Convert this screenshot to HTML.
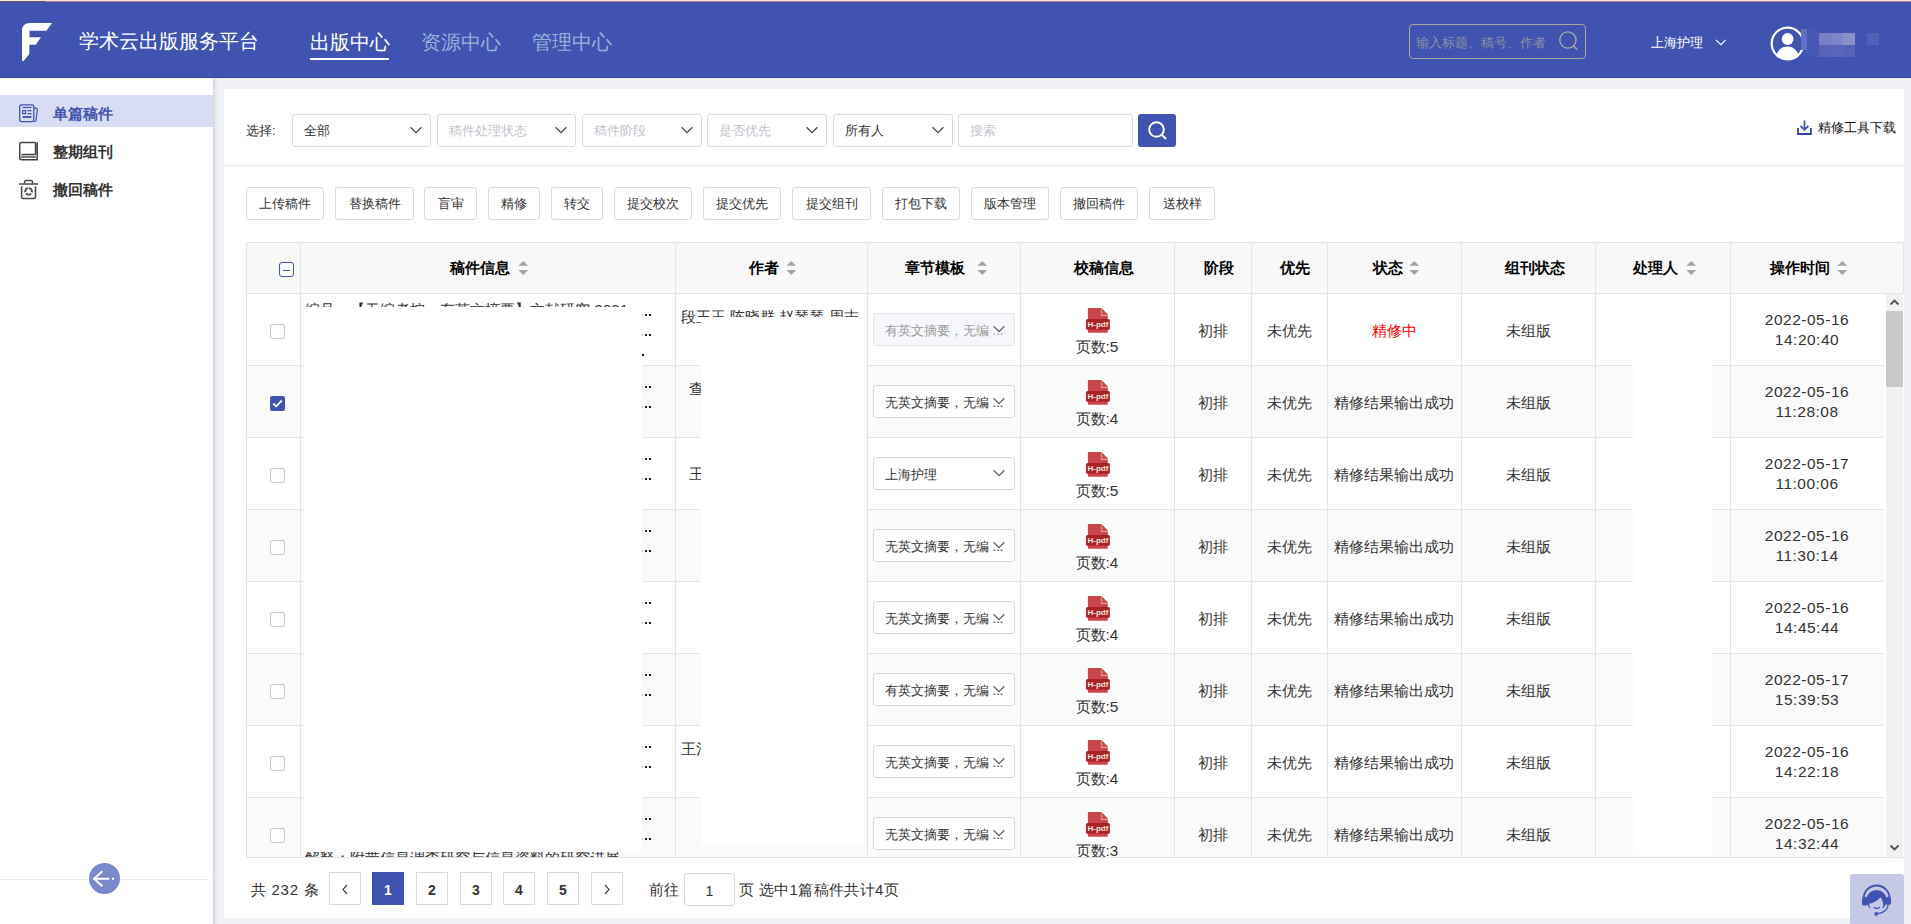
<!DOCTYPE html><html><head><meta charset="utf-8"><style>
*{box-sizing:border-box;margin:0;padding:0}
html,body{width:1911px;height:924px;overflow:hidden}
body{position:relative;background:#f0f1f5;font-family:"Liberation Sans",sans-serif;color:#333;}
.a{position:absolute}
.nw{white-space:nowrap}
#hdr{left:0;top:0;width:1911px;height:78px;background:#4153b1;}
.logo{left:22px;top:22px;width:32px;height:40px}
.ttl{left:79px;top:29px;font-size:20px;color:#fff;white-space:nowrap;line-height:24px}
.nav{top:30px;font-size:20px;line-height:24px;white-space:nowrap;color:#98b1d9}
.nav.on{color:#fff}
.hsearch{left:1409px;top:24px;width:177px;height:35px;border:1px solid #aaa69c;border-radius:4px}
.hsearch span{position:absolute;left:6px;top:10px;font-size:13px;line-height:16px;color:#8b8fa3;white-space:nowrap}
.org{left:1651px;top:35px;font-size:13px;line-height:16px;color:#fff;white-space:nowrap}
#side{left:0;top:78px;width:213px;height:846px;background:#fff}
#shadow{left:213px;top:78px;width:6px;height:846px;background:linear-gradient(to right,#d3d5d9,#e8eaee 45%,#f0f1f5)}
.sitem{left:0;width:213px;height:32px}
.sitem.on{background:#d8dcf5}
.sitem .tx{position:absolute;left:53px;top:11px;font-size:15px;line-height:16px;font-weight:bold;color:#333;white-space:nowrap}
.sitem.on .tx{color:#4153b1}
#card{left:224px;top:89px;width:1680px;height:829px;background:#fff}
.lbl{font-size:13px;line-height:16px;color:#333;white-space:nowrap}
.sel{height:33px;border:1px solid #dadada;border-radius:3px;background:#fff}
.sel span{position:absolute;left:11px;top:8px;font-size:13px;line-height:16px;white-space:nowrap;color:#333}
.sel span.ph{color:#c0c4cc}
.sel svg{position:absolute;right:8px;top:11px}
.btn{top:187px;height:33px;border:1px solid #dadada;border-radius:3px;background:#fff;font-size:13px;line-height:31px;text-align:center;color:#333;white-space:nowrap}
.hl{background:#e6e6e6}
.th{top:259px;font-size:15px;line-height:18px;font-weight:bold;color:#000;white-space:nowrap}
.td{font-size:15.3px;line-height:18px;color:#333;white-space:nowrap;text-align:center}
.rsel{left:873px;width:142px;height:33px;border:1px solid #d6d6d6;border-radius:3px;background:#fff}
.rsel.dis{background:#f5f7fa;border-color:#e4e7ed}
.rsel span{position:absolute;left:11px;top:9px;font-size:13px;line-height:16px;white-space:nowrap;color:#333}
.rsel.dis span{color:#999}
.rsel svg{position:absolute;left:119px;top:11px}
.cb{left:270px;width:15px;height:15px;border:1px solid #c9c9c9;border-radius:2px;background:#fff}
.red{background:#fff}
.pg{top:872px;width:32px;height:33px;border:1px solid #d9d9d9;background:#fff;font-size:14px;line-height:35px;text-align:center;font-weight:bold;color:#333}
</style></head><body>
<div id="hdr" class="a">
<div class="a" style="left:0;top:0;width:1911px;height:1px;background:#f3e9e6"></div>
<div class="a" style="left:0;top:1px;width:45px;height:1px;background:#6b5555"></div>
<div class="a" style="left:45px;top:1px;width:1866px;height:1px;background:#b27a86"></div>
<div class="a" style="left:0;top:77px;width:1911px;height:1px;background:#3343a5"></div>
<svg class="a" style="left:0;top:0" width="60" height="70" viewBox="0 0 60 70"><path d="M22 60 L22 31 Q22 23 30 23 L52 23 L46.4 30.7 L29.5 30.7 L29.5 37.2 L41 37.2 L35.8 44.8 L29.3 44.8 L29.3 54 L23.8 60.8 Q22 62 22 60 Z" fill="#fff"/></svg>
<div class="a ttl">学术云出版服务平台</div>
<div class="a nav on" style="left:310px">出版中心</div>
<div class="a nav" style="left:421px">资源中心</div>
<div class="a nav" style="left:532px">管理中心</div>
<div class="a" style="left:310px;top:58px;width:79px;height:2px;background:#fff"></div>
<div class="a hsearch"><span>输入标题、稿号、作者</span><svg class="a" style="left:148px;top:6px" width="22" height="22" viewBox="0 0 22 22"><circle cx="9.9" cy="9" r="8.1" fill="none" stroke="#aaa69c" stroke-width="1.4"/><path d="M15.6 15 L19.3 18.7" stroke="#aaa69c" stroke-width="1.4"/></svg></div>
<div class="a org">上海护理</div>
<svg class="a" style="left:1714px;top:38px" width="13" height="9" viewBox="0 0 13 9"><path d="M1.9 1.9 L6.9 6.7 L11.7 1.9" fill="none" stroke="#fff" stroke-width="1.1"/></svg>
<svg class="a" style="left:1769px;top:25px" width="37" height="37" viewBox="0 0 37 37"><circle cx="18.5" cy="18.5" r="15.8" fill="none" stroke="#fff" stroke-width="2.2"/><circle cx="18.6" cy="14" r="5.9" fill="#fff"/><path d="M7 31 Q10 21.5 18.6 21.5 Q27 21.5 30 31 Q25.5 35 18.5 35 Q11.5 35 7 31 Z" fill="#fff"/></svg>
<div class="a" style="left:1801px;top:29px;width:6px;height:21px;background:#6570c0"></div>
<div class="a" style="left:1807px;top:29px;width:12px;height:28px;background:#4758b4"></div>
<div class="a" style="left:1819px;top:33px;width:12px;height:12px;background:#7880c5"></div>
<div class="a" style="left:1831px;top:33px;width:12px;height:12px;background:#7a86c8"></div>
<div class="a" style="left:1843px;top:33px;width:12px;height:12px;background:#8a90c8"></div>
<div class="a" style="left:1819px;top:45px;width:12px;height:12px;background:#5863b8"></div>
<div class="a" style="left:1831px;top:45px;width:12px;height:12px;background:#5a66ba"></div>
<div class="a" style="left:1843px;top:45px;width:12px;height:12px;background:#5562b7"></div>
<div class="a" style="left:1867px;top:33px;width:12px;height:12px;background:#5260b8"></div>
</div>
<div id="side" class="a">
</div>
<div id="shadow" class="a"></div>
<div class="a sitem on" style="top:95px"><div class="tx">单篇稿件</div></div>
<div class="a sitem" style="top:133px"><div class="tx">整期组刊</div></div>
<div class="a sitem" style="top:171px"><div class="tx">撤回稿件</div></div>
<div id="card" class="a"></div>
<div class="a lbl" style="left:246px;top:123px">选择:</div>
<div class="a sel" style="left:292px;top:114px;width:139px"><span class="">全部</span><svg width="12" height="8" viewBox="0 0 12 8"><path d="M0.6 1.2 L6 6.6 L11.4 1.2" fill="none" stroke="#4a4a4a" stroke-width="1.3"/></svg></div>
<div class="a sel" style="left:437px;top:114px;width:139px"><span class="ph">稿件处理状态</span><svg width="12" height="8" viewBox="0 0 12 8"><path d="M0.6 1.2 L6 6.6 L11.4 1.2" fill="none" stroke="#4a4a4a" stroke-width="1.3"/></svg></div>
<div class="a sel" style="left:582px;top:114px;width:120px"><span class="ph">稿件阶段</span><svg width="12" height="8" viewBox="0 0 12 8"><path d="M0.6 1.2 L6 6.6 L11.4 1.2" fill="none" stroke="#4a4a4a" stroke-width="1.3"/></svg></div>
<div class="a sel" style="left:707px;top:114px;width:120px"><span class="ph">是否优先</span><svg width="12" height="8" viewBox="0 0 12 8"><path d="M0.6 1.2 L6 6.6 L11.4 1.2" fill="none" stroke="#4a4a4a" stroke-width="1.3"/></svg></div>
<div class="a sel" style="left:833px;top:114px;width:120px"><span class="">所有人</span><svg width="12" height="8" viewBox="0 0 12 8"><path d="M0.6 1.2 L6 6.6 L11.4 1.2" fill="none" stroke="#4a4a4a" stroke-width="1.3"/></svg></div>
<div class="a sel" style="left:958px;top:114px;width:175px"><span class="ph">搜索</span></div>
<div class="a" style="left:1138px;top:114px;width:38px;height:33px;background:#4153b1;border-radius:3px"><svg class="a" style="left:9px;top:6px" width="21" height="21" viewBox="0 0 21 21"><circle cx="9.5" cy="9.5" r="7.3" fill="none" stroke="#fff" stroke-width="2"/><path d="M14.8 14.8 L19 19" stroke="#fff" stroke-width="2"/></svg></div>
<svg class="a" style="left:1796px;top:120px" width="17" height="16" viewBox="0 0 17 16"><path d="M8.5 0.5 L8.5 9.5 M4.6 6 L8.5 9.8 L12.4 6" fill="none" stroke="#4153b1" stroke-width="1.8"/><path d="M2 8 L2 14 L14.9 14 L14.9 8" fill="none" stroke="#3444a8" stroke-width="1.8"/></svg>
<div class="a lbl" style="left:1818px;top:120px;color:#111">精修工具下载</div>
<div class="a hl" style="left:224px;top:165px;width:1680px;height:1px;background:#ebebeb"></div>
<div class="a btn" style="left:246px;width:78px">上传稿件</div>
<div class="a btn" style="left:335px;width:79px">替换稿件</div>
<div class="a btn" style="left:424px;width:53px">盲审</div>
<div class="a btn" style="left:488px;width:52px">精修</div>
<div class="a btn" style="left:551px;width:52px">转交</div>
<div class="a btn" style="left:614px;width:78px">提交校次</div>
<div class="a btn" style="left:703px;width:78px">提交优先</div>
<div class="a btn" style="left:792px;width:79px">提交组刊</div>
<div class="a btn" style="left:882px;width:78px">打包下载</div>
<div class="a btn" style="left:971px;width:78px">版本管理</div>
<div class="a btn" style="left:1060px;width:78px">撤回稿件</div>
<div class="a btn" style="left:1149px;width:66px">送校样</div>
<div class="a" style="left:246px;top:242px;width:1657px;height:51px;background:#f8f8f8"></div>
<div class="a" style="left:246px;top:293px;width:1638px;height:72px;background:#fff"></div>
<div class="a" style="left:246px;top:365px;width:1638px;height:72px;background:#fafafa"></div>
<div class="a" style="left:246px;top:437px;width:1638px;height:72px;background:#fff"></div>
<div class="a" style="left:246px;top:509px;width:1638px;height:72px;background:#fafafa"></div>
<div class="a" style="left:246px;top:581px;width:1638px;height:72px;background:#fff"></div>
<div class="a" style="left:246px;top:653px;width:1638px;height:72px;background:#fafafa"></div>
<div class="a" style="left:246px;top:725px;width:1638px;height:72px;background:#fff"></div>
<div class="a" style="left:246px;top:797px;width:1638px;height:60px;background:#fafafa"></div>
<div class="a" style="left:246px;top:242px;width:1658px;height:1px;background:#e4e4e4"></div>
<div class="a" style="left:246px;top:293px;width:1658px;height:1px;background:#e4e4e4"></div>
<div class="a" style="left:246px;top:365px;width:1638px;height:1px;background:#e4e4e4"></div>
<div class="a" style="left:246px;top:437px;width:1638px;height:1px;background:#e4e4e4"></div>
<div class="a" style="left:246px;top:509px;width:1638px;height:1px;background:#e4e4e4"></div>
<div class="a" style="left:246px;top:581px;width:1638px;height:1px;background:#e4e4e4"></div>
<div class="a" style="left:246px;top:653px;width:1638px;height:1px;background:#e4e4e4"></div>
<div class="a" style="left:246px;top:725px;width:1638px;height:1px;background:#e4e4e4"></div>
<div class="a" style="left:246px;top:797px;width:1638px;height:1px;background:#e4e4e4"></div>
<div class="a" style="left:246px;top:857px;width:1658px;height:1px;background:#e4e4e4"></div>
<div class="a" style="left:246px;top:242px;width:1px;height:615px;background:#e4e4e4"></div>
<div class="a" style="left:300px;top:242px;width:1px;height:615px;background:#e4e4e4"></div>
<div class="a" style="left:675px;top:242px;width:1px;height:615px;background:#e4e4e4"></div>
<div class="a" style="left:867px;top:242px;width:1px;height:615px;background:#e4e4e4"></div>
<div class="a" style="left:1020px;top:242px;width:1px;height:615px;background:#e4e4e4"></div>
<div class="a" style="left:1174px;top:242px;width:1px;height:615px;background:#e4e4e4"></div>
<div class="a" style="left:1251px;top:242px;width:1px;height:615px;background:#e4e4e4"></div>
<div class="a" style="left:1327px;top:242px;width:1px;height:615px;background:#e4e4e4"></div>
<div class="a" style="left:1461px;top:242px;width:1px;height:615px;background:#e4e4e4"></div>
<div class="a" style="left:1595px;top:242px;width:1px;height:615px;background:#e4e4e4"></div>
<div class="a" style="left:1730px;top:242px;width:1px;height:615px;background:#e4e4e4"></div>
<div class="a" style="left:1903px;top:242px;width:1px;height:51px;background:#e4e4e4"></div>
<div class="a" style="left:1886px;top:294px;width:17px;height:563px;background:#f1f1f1"></div>
<div class="a" style="left:1886px;top:311px;width:17px;height:76px;background:#c9c9c9"></div>
<svg class="a" style="left:1889px;top:298px" width="11" height="8" viewBox="0 0 11 8"><path d="M1.5 6.5 L5.5 2.5 L9.5 6.5" fill="none" stroke="#505050" stroke-width="1.8"/></svg>
<svg class="a" style="left:1889px;top:844px" width="11" height="8" viewBox="0 0 11 8"><path d="M1.5 1.5 L5.5 5.5 L9.5 1.5" fill="none" stroke="#505050" stroke-width="1.8"/></svg>
<div class="a" style="left:279px;top:262px;width:15px;height:15px;border:1px solid #4153b1;border-radius:3px;background:#fff"><div class="a" style="left:3px;top:7px;width:7px;height:1px;background:#4153b1"></div></div>
<div class="a th" style="left:450px">稿件信息</div>
<svg class="a" style="left:518px;top:261px" width="11" height="15" viewBox="0 0 11 15"><path d="M5.3 0 L10.2 4.8 L0.4 4.8 Z" fill="#a3a3a3"/><path d="M5.3 13.9 L10.2 9.1 L0.4 9.1 Z" fill="#a3a3a3"/></svg>
<div class="a th" style="left:749px">作者</div>
<svg class="a" style="left:786px;top:261px" width="11" height="15" viewBox="0 0 11 15"><path d="M5.3 0 L10.2 4.8 L0.4 4.8 Z" fill="#a3a3a3"/><path d="M5.3 13.9 L10.2 9.1 L0.4 9.1 Z" fill="#a3a3a3"/></svg>
<div class="a th" style="left:905px">章节模板</div>
<svg class="a" style="left:977px;top:261px" width="11" height="15" viewBox="0 0 11 15"><path d="M5.3 0 L10.2 4.8 L0.4 4.8 Z" fill="#a3a3a3"/><path d="M5.3 13.9 L10.2 9.1 L0.4 9.1 Z" fill="#a3a3a3"/></svg>
<div class="a th" style="left:1074px">校稿信息</div>
<div class="a th" style="left:1204px">阶段</div>
<div class="a th" style="left:1280px">优先</div>
<div class="a th" style="left:1373px">状态</div>
<svg class="a" style="left:1409px;top:261px" width="11" height="15" viewBox="0 0 11 15"><path d="M5.3 0 L10.2 4.8 L0.4 4.8 Z" fill="#a3a3a3"/><path d="M5.3 13.9 L10.2 9.1 L0.4 9.1 Z" fill="#a3a3a3"/></svg>
<div class="a th" style="left:1505px">组刊状态</div>
<div class="a th" style="left:1633px">处理人</div>
<svg class="a" style="left:1686px;top:261px" width="11" height="15" viewBox="0 0 11 15"><path d="M5.3 0 L10.2 4.8 L0.4 4.8 Z" fill="#a3a3a3"/><path d="M5.3 13.9 L10.2 9.1 L0.4 9.1 Z" fill="#a3a3a3"/></svg>
<div class="a th" style="left:1770px">操作时间</div>
<svg class="a" style="left:1837px;top:261px" width="11" height="15" viewBox="0 0 11 15"><path d="M5.3 0 L10.2 4.8 L0.4 4.8 Z" fill="#a3a3a3"/><path d="M5.3 13.9 L10.2 9.1 L0.4 9.1 Z" fill="#a3a3a3"/></svg>
<div class="a" style="left:246px;top:294px;width:1638px;height:563px;overflow:hidden">
<div class="a cb" style="left:24px;top:30px"></div>
<div class="a rsel dis" style="left:627px;top:19px"><span>有英文摘要，无编 ...</span><svg width="12" height="8" viewBox="0 0 12 8"><path d="M0.6 1.2 L6 6.6 L11.4 1.2" fill="none" stroke="#606266" stroke-width="1.3"/></svg></div>
<svg class="a" style="left:839px;top:13px" width="26" height="27" viewBox="0 0 26 27"><path d="M2.9 2 Q2.9 1 3.9 1 L16.4 1 L22.8 7.4 L22.8 24.7 Q22.8 25.7 21.8 25.7 L3.9 25.7 Q2.9 25.7 2.9 24.7 Z" fill="#c9464a"/><path d="M16.4 1.2 L16.4 8.4 L22.7 8.4" fill="none" stroke="#eab4b4" stroke-width="0.9"/><path d="M16.9 1.8 L22.2 7.4 L16.9 7.4 Z" fill="#cf5055"/><rect x="1" y="12" width="23.9" height="10.8" rx="1.5" fill="#a92228"/><text x="12.9" y="20.3" font-family="Liberation Sans" font-size="8" font-weight="bold" fill="#f2e2e2" text-anchor="middle">H-pdf</text></svg>
<div class="a td" style="left:774px;top:44px;width:154px">页数:5</div>
<div class="a td" style="left:928px;top:28px;width:77px">初排</div>
<div class="a td" style="left:1005px;top:28px;width:76px">未优先</div>
<div class="a td" style="left:1081px;top:28px;width:134px;color:#f00">精修中</div>
<div class="a td" style="left:1215px;top:28px;width:134px">未组版</div>
<div class="a td" style="left:1484px;top:16px;width:154px;line-height:20px;font-size:15.5px;letter-spacing:0.5px">2022-05-16<br>14:20:40</div>
<div class="a" style="left:395px;top:20px;width:2px;height:2px;background:#bbb"></div>
<div class="a" style="left:399px;top:20px;width:2px;height:2px;background:#222"></div>
<div class="a" style="left:403px;top:20px;width:2px;height:2px;background:#222"></div>
<div class="a" style="left:395px;top:40px;width:2px;height:2px;background:#bbb"></div>
<div class="a" style="left:399px;top:40px;width:2px;height:2px;background:#222"></div>
<div class="a" style="left:403px;top:40px;width:2px;height:2px;background:#222"></div>
<div class="a" style="left:24px;top:102px;width:15px;height:15px;background:#4153b1;border-radius:2px"><svg class="a" style="left:2px;top:3px" width="11" height="9" viewBox="0 0 11 9"><path d="M1.2 4.5 L4.2 7.3 L9.8 1.5" fill="none" stroke="#fff" stroke-width="1.8"/></svg></div>
<div class="a rsel" style="left:627px;top:91px"><span>无英文摘要，无编 ...</span><svg width="12" height="8" viewBox="0 0 12 8"><path d="M0.6 1.2 L6 6.6 L11.4 1.2" fill="none" stroke="#606266" stroke-width="1.3"/></svg></div>
<svg class="a" style="left:839px;top:85px" width="26" height="27" viewBox="0 0 26 27"><path d="M2.9 2 Q2.9 1 3.9 1 L16.4 1 L22.8 7.4 L22.8 24.7 Q22.8 25.7 21.8 25.7 L3.9 25.7 Q2.9 25.7 2.9 24.7 Z" fill="#c9464a"/><path d="M16.4 1.2 L16.4 8.4 L22.7 8.4" fill="none" stroke="#eab4b4" stroke-width="0.9"/><path d="M16.9 1.8 L22.2 7.4 L16.9 7.4 Z" fill="#cf5055"/><rect x="1" y="12" width="23.9" height="10.8" rx="1.5" fill="#a92228"/><text x="12.9" y="20.3" font-family="Liberation Sans" font-size="8" font-weight="bold" fill="#f2e2e2" text-anchor="middle">H-pdf</text></svg>
<div class="a td" style="left:774px;top:116px;width:154px">页数:4</div>
<div class="a td" style="left:928px;top:100px;width:77px">初排</div>
<div class="a td" style="left:1005px;top:100px;width:76px">未优先</div>
<div class="a td" style="left:1081px;top:100px;width:134px;color:#333">精修结果输出成功</div>
<div class="a td" style="left:1215px;top:100px;width:134px">未组版</div>
<div class="a td" style="left:1484px;top:88px;width:154px;line-height:20px;font-size:15.5px;letter-spacing:0.5px">2022-05-16<br>11:28:08</div>
<div class="a" style="left:395px;top:92px;width:2px;height:2px;background:#bbb"></div>
<div class="a" style="left:399px;top:92px;width:2px;height:2px;background:#222"></div>
<div class="a" style="left:403px;top:92px;width:2px;height:2px;background:#222"></div>
<div class="a" style="left:395px;top:112px;width:2px;height:2px;background:#bbb"></div>
<div class="a" style="left:399px;top:112px;width:2px;height:2px;background:#222"></div>
<div class="a" style="left:403px;top:112px;width:2px;height:2px;background:#222"></div>
<div class="a cb" style="left:24px;top:174px"></div>
<div class="a rsel" style="left:627px;top:163px"><span>上海护理</span><svg width="12" height="8" viewBox="0 0 12 8"><path d="M0.6 1.2 L6 6.6 L11.4 1.2" fill="none" stroke="#606266" stroke-width="1.3"/></svg></div>
<svg class="a" style="left:839px;top:157px" width="26" height="27" viewBox="0 0 26 27"><path d="M2.9 2 Q2.9 1 3.9 1 L16.4 1 L22.8 7.4 L22.8 24.7 Q22.8 25.7 21.8 25.7 L3.9 25.7 Q2.9 25.7 2.9 24.7 Z" fill="#c9464a"/><path d="M16.4 1.2 L16.4 8.4 L22.7 8.4" fill="none" stroke="#eab4b4" stroke-width="0.9"/><path d="M16.9 1.8 L22.2 7.4 L16.9 7.4 Z" fill="#cf5055"/><rect x="1" y="12" width="23.9" height="10.8" rx="1.5" fill="#a92228"/><text x="12.9" y="20.3" font-family="Liberation Sans" font-size="8" font-weight="bold" fill="#f2e2e2" text-anchor="middle">H-pdf</text></svg>
<div class="a td" style="left:774px;top:188px;width:154px">页数:5</div>
<div class="a td" style="left:928px;top:172px;width:77px">初排</div>
<div class="a td" style="left:1005px;top:172px;width:76px">未优先</div>
<div class="a td" style="left:1081px;top:172px;width:134px;color:#333">精修结果输出成功</div>
<div class="a td" style="left:1215px;top:172px;width:134px">未组版</div>
<div class="a td" style="left:1484px;top:160px;width:154px;line-height:20px;font-size:15.5px;letter-spacing:0.5px">2022-05-17<br>11:00:06</div>
<div class="a" style="left:395px;top:164px;width:2px;height:2px;background:#bbb"></div>
<div class="a" style="left:399px;top:164px;width:2px;height:2px;background:#222"></div>
<div class="a" style="left:403px;top:164px;width:2px;height:2px;background:#222"></div>
<div class="a" style="left:395px;top:184px;width:2px;height:2px;background:#bbb"></div>
<div class="a" style="left:399px;top:184px;width:2px;height:2px;background:#222"></div>
<div class="a" style="left:403px;top:184px;width:2px;height:2px;background:#222"></div>
<div class="a cb" style="left:24px;top:246px"></div>
<div class="a rsel" style="left:627px;top:235px"><span>无英文摘要，无编 ...</span><svg width="12" height="8" viewBox="0 0 12 8"><path d="M0.6 1.2 L6 6.6 L11.4 1.2" fill="none" stroke="#606266" stroke-width="1.3"/></svg></div>
<svg class="a" style="left:839px;top:229px" width="26" height="27" viewBox="0 0 26 27"><path d="M2.9 2 Q2.9 1 3.9 1 L16.4 1 L22.8 7.4 L22.8 24.7 Q22.8 25.7 21.8 25.7 L3.9 25.7 Q2.9 25.7 2.9 24.7 Z" fill="#c9464a"/><path d="M16.4 1.2 L16.4 8.4 L22.7 8.4" fill="none" stroke="#eab4b4" stroke-width="0.9"/><path d="M16.9 1.8 L22.2 7.4 L16.9 7.4 Z" fill="#cf5055"/><rect x="1" y="12" width="23.9" height="10.8" rx="1.5" fill="#a92228"/><text x="12.9" y="20.3" font-family="Liberation Sans" font-size="8" font-weight="bold" fill="#f2e2e2" text-anchor="middle">H-pdf</text></svg>
<div class="a td" style="left:774px;top:260px;width:154px">页数:4</div>
<div class="a td" style="left:928px;top:244px;width:77px">初排</div>
<div class="a td" style="left:1005px;top:244px;width:76px">未优先</div>
<div class="a td" style="left:1081px;top:244px;width:134px;color:#333">精修结果输出成功</div>
<div class="a td" style="left:1215px;top:244px;width:134px">未组版</div>
<div class="a td" style="left:1484px;top:232px;width:154px;line-height:20px;font-size:15.5px;letter-spacing:0.5px">2022-05-16<br>11:30:14</div>
<div class="a" style="left:395px;top:236px;width:2px;height:2px;background:#bbb"></div>
<div class="a" style="left:399px;top:236px;width:2px;height:2px;background:#222"></div>
<div class="a" style="left:403px;top:236px;width:2px;height:2px;background:#222"></div>
<div class="a" style="left:395px;top:256px;width:2px;height:2px;background:#bbb"></div>
<div class="a" style="left:399px;top:256px;width:2px;height:2px;background:#222"></div>
<div class="a" style="left:403px;top:256px;width:2px;height:2px;background:#222"></div>
<div class="a cb" style="left:24px;top:318px"></div>
<div class="a rsel" style="left:627px;top:307px"><span>无英文摘要，无编 ...</span><svg width="12" height="8" viewBox="0 0 12 8"><path d="M0.6 1.2 L6 6.6 L11.4 1.2" fill="none" stroke="#606266" stroke-width="1.3"/></svg></div>
<svg class="a" style="left:839px;top:301px" width="26" height="27" viewBox="0 0 26 27"><path d="M2.9 2 Q2.9 1 3.9 1 L16.4 1 L22.8 7.4 L22.8 24.7 Q22.8 25.7 21.8 25.7 L3.9 25.7 Q2.9 25.7 2.9 24.7 Z" fill="#c9464a"/><path d="M16.4 1.2 L16.4 8.4 L22.7 8.4" fill="none" stroke="#eab4b4" stroke-width="0.9"/><path d="M16.9 1.8 L22.2 7.4 L16.9 7.4 Z" fill="#cf5055"/><rect x="1" y="12" width="23.9" height="10.8" rx="1.5" fill="#a92228"/><text x="12.9" y="20.3" font-family="Liberation Sans" font-size="8" font-weight="bold" fill="#f2e2e2" text-anchor="middle">H-pdf</text></svg>
<div class="a td" style="left:774px;top:332px;width:154px">页数:4</div>
<div class="a td" style="left:928px;top:316px;width:77px">初排</div>
<div class="a td" style="left:1005px;top:316px;width:76px">未优先</div>
<div class="a td" style="left:1081px;top:316px;width:134px;color:#333">精修结果输出成功</div>
<div class="a td" style="left:1215px;top:316px;width:134px">未组版</div>
<div class="a td" style="left:1484px;top:304px;width:154px;line-height:20px;font-size:15.5px;letter-spacing:0.5px">2022-05-16<br>14:45:44</div>
<div class="a" style="left:395px;top:308px;width:2px;height:2px;background:#bbb"></div>
<div class="a" style="left:399px;top:308px;width:2px;height:2px;background:#222"></div>
<div class="a" style="left:403px;top:308px;width:2px;height:2px;background:#222"></div>
<div class="a" style="left:395px;top:328px;width:2px;height:2px;background:#bbb"></div>
<div class="a" style="left:399px;top:328px;width:2px;height:2px;background:#222"></div>
<div class="a" style="left:403px;top:328px;width:2px;height:2px;background:#222"></div>
<div class="a cb" style="left:24px;top:390px"></div>
<div class="a rsel" style="left:627px;top:379px"><span>有英文摘要，无编 ...</span><svg width="12" height="8" viewBox="0 0 12 8"><path d="M0.6 1.2 L6 6.6 L11.4 1.2" fill="none" stroke="#606266" stroke-width="1.3"/></svg></div>
<svg class="a" style="left:839px;top:373px" width="26" height="27" viewBox="0 0 26 27"><path d="M2.9 2 Q2.9 1 3.9 1 L16.4 1 L22.8 7.4 L22.8 24.7 Q22.8 25.7 21.8 25.7 L3.9 25.7 Q2.9 25.7 2.9 24.7 Z" fill="#c9464a"/><path d="M16.4 1.2 L16.4 8.4 L22.7 8.4" fill="none" stroke="#eab4b4" stroke-width="0.9"/><path d="M16.9 1.8 L22.2 7.4 L16.9 7.4 Z" fill="#cf5055"/><rect x="1" y="12" width="23.9" height="10.8" rx="1.5" fill="#a92228"/><text x="12.9" y="20.3" font-family="Liberation Sans" font-size="8" font-weight="bold" fill="#f2e2e2" text-anchor="middle">H-pdf</text></svg>
<div class="a td" style="left:774px;top:404px;width:154px">页数:5</div>
<div class="a td" style="left:928px;top:388px;width:77px">初排</div>
<div class="a td" style="left:1005px;top:388px;width:76px">未优先</div>
<div class="a td" style="left:1081px;top:388px;width:134px;color:#333">精修结果输出成功</div>
<div class="a td" style="left:1215px;top:388px;width:134px">未组版</div>
<div class="a td" style="left:1484px;top:376px;width:154px;line-height:20px;font-size:15.5px;letter-spacing:0.5px">2022-05-17<br>15:39:53</div>
<div class="a" style="left:395px;top:380px;width:2px;height:2px;background:#bbb"></div>
<div class="a" style="left:399px;top:380px;width:2px;height:2px;background:#222"></div>
<div class="a" style="left:403px;top:380px;width:2px;height:2px;background:#222"></div>
<div class="a" style="left:395px;top:400px;width:2px;height:2px;background:#bbb"></div>
<div class="a" style="left:399px;top:400px;width:2px;height:2px;background:#222"></div>
<div class="a" style="left:403px;top:400px;width:2px;height:2px;background:#222"></div>
<div class="a cb" style="left:24px;top:462px"></div>
<div class="a rsel" style="left:627px;top:451px"><span>无英文摘要，无编 ...</span><svg width="12" height="8" viewBox="0 0 12 8"><path d="M0.6 1.2 L6 6.6 L11.4 1.2" fill="none" stroke="#606266" stroke-width="1.3"/></svg></div>
<svg class="a" style="left:839px;top:445px" width="26" height="27" viewBox="0 0 26 27"><path d="M2.9 2 Q2.9 1 3.9 1 L16.4 1 L22.8 7.4 L22.8 24.7 Q22.8 25.7 21.8 25.7 L3.9 25.7 Q2.9 25.7 2.9 24.7 Z" fill="#c9464a"/><path d="M16.4 1.2 L16.4 8.4 L22.7 8.4" fill="none" stroke="#eab4b4" stroke-width="0.9"/><path d="M16.9 1.8 L22.2 7.4 L16.9 7.4 Z" fill="#cf5055"/><rect x="1" y="12" width="23.9" height="10.8" rx="1.5" fill="#a92228"/><text x="12.9" y="20.3" font-family="Liberation Sans" font-size="8" font-weight="bold" fill="#f2e2e2" text-anchor="middle">H-pdf</text></svg>
<div class="a td" style="left:774px;top:476px;width:154px">页数:4</div>
<div class="a td" style="left:928px;top:460px;width:77px">初排</div>
<div class="a td" style="left:1005px;top:460px;width:76px">未优先</div>
<div class="a td" style="left:1081px;top:460px;width:134px;color:#333">精修结果输出成功</div>
<div class="a td" style="left:1215px;top:460px;width:134px">未组版</div>
<div class="a td" style="left:1484px;top:448px;width:154px;line-height:20px;font-size:15.5px;letter-spacing:0.5px">2022-05-16<br>14:22:18</div>
<div class="a" style="left:395px;top:452px;width:2px;height:2px;background:#bbb"></div>
<div class="a" style="left:399px;top:452px;width:2px;height:2px;background:#222"></div>
<div class="a" style="left:403px;top:452px;width:2px;height:2px;background:#222"></div>
<div class="a" style="left:395px;top:472px;width:2px;height:2px;background:#bbb"></div>
<div class="a" style="left:399px;top:472px;width:2px;height:2px;background:#222"></div>
<div class="a" style="left:403px;top:472px;width:2px;height:2px;background:#222"></div>
<div class="a cb" style="left:24px;top:534px"></div>
<div class="a rsel" style="left:627px;top:523px"><span>无英文摘要，无编 ...</span><svg width="12" height="8" viewBox="0 0 12 8"><path d="M0.6 1.2 L6 6.6 L11.4 1.2" fill="none" stroke="#606266" stroke-width="1.3"/></svg></div>
<svg class="a" style="left:839px;top:517px" width="26" height="27" viewBox="0 0 26 27"><path d="M2.9 2 Q2.9 1 3.9 1 L16.4 1 L22.8 7.4 L22.8 24.7 Q22.8 25.7 21.8 25.7 L3.9 25.7 Q2.9 25.7 2.9 24.7 Z" fill="#c9464a"/><path d="M16.4 1.2 L16.4 8.4 L22.7 8.4" fill="none" stroke="#eab4b4" stroke-width="0.9"/><path d="M16.9 1.8 L22.2 7.4 L16.9 7.4 Z" fill="#cf5055"/><rect x="1" y="12" width="23.9" height="10.8" rx="1.5" fill="#a92228"/><text x="12.9" y="20.3" font-family="Liberation Sans" font-size="8" font-weight="bold" fill="#f2e2e2" text-anchor="middle">H-pdf</text></svg>
<div class="a td" style="left:774px;top:548px;width:154px">页数:3</div>
<div class="a td" style="left:928px;top:532px;width:77px">初排</div>
<div class="a td" style="left:1005px;top:532px;width:76px">未优先</div>
<div class="a td" style="left:1081px;top:532px;width:134px;color:#333">精修结果输出成功</div>
<div class="a td" style="left:1215px;top:532px;width:134px">未组版</div>
<div class="a td" style="left:1484px;top:520px;width:154px;line-height:20px;font-size:15.5px;letter-spacing:0.5px">2022-05-16<br>14:32:44</div>
<div class="a" style="left:395px;top:524px;width:2px;height:2px;background:#bbb"></div>
<div class="a" style="left:399px;top:524px;width:2px;height:2px;background:#222"></div>
<div class="a" style="left:403px;top:524px;width:2px;height:2px;background:#222"></div>
<div class="a" style="left:395px;top:544px;width:2px;height:2px;background:#bbb"></div>
<div class="a" style="left:399px;top:544px;width:2px;height:2px;background:#222"></div>
<div class="a" style="left:403px;top:544px;width:2px;height:2px;background:#222"></div>
</div>
<div class="a" style="left:246px;top:294px;width:1638px;height:563px;overflow:hidden">
<div class="a td" style="left:59px;top:7px;text-align:left">编号：【无编者按，有英文摘要】文献研究 2021</div>
<div class="a td" style="left:59px;top:555px;text-align:left">解释；附带信息调查研究与信息资料的研究进展</div>
<div class="a" style="left:396px;top:60px;width:2px;height:2px;background:#222"></div>
<div class="a td" style="left:435px;top:14px;text-align:left">段王玉 陈晓群 赵琴琴 周志</div>
<div class="a td" style="left:443px;top:86px;text-align:left">查</div>
<div class="a td" style="left:443px;top:171px;text-align:left">王</div>
<div class="a td" style="left:435px;top:446px;text-align:left">王治</div>
</div>
<div class="a red" style="left:304px;top:307px;width:338px;height:545px"></div>
<div class="a red" style="left:701px;top:317px;width:165px;height:528px"></div>
<div class="a red" style="left:1633px;top:330px;width:79px;height:525px"></div>
<div class="a lbl" style="left:251px;top:881px;font-size:15px;line-height:18px;letter-spacing:0.7px">共 232 条</div>
<div class="a pg" style="left:329px"><svg class="a" style="left:10px;top:11px" width="10" height="11" viewBox="0 0 10 11"><path d="M7 1 L3 5.5 L7 10" fill="none" stroke="#444" stroke-width="1.2"/></svg></div>
<div class="a pg" style="left:372px;background:#4153b1;border-color:#4153b1;color:#fff">1</div>
<div class="a pg" style="left:416px">2</div>
<div class="a pg" style="left:460px">3</div>
<div class="a pg" style="left:503px">4</div>
<div class="a pg" style="left:547px">5</div>
<div class="a pg" style="left:591px"><svg class="a" style="left:10px;top:11px" width="10" height="11" viewBox="0 0 10 11"><path d="M3 1 L7 5.5 L3 10" fill="none" stroke="#444" stroke-width="1.2"/></svg></div>
<div class="a lbl" style="left:649px;top:881px;font-size:15px;line-height:18px">前往</div>
<div class="a" style="left:684px;top:873px;width:51px;height:33px;border:1px solid #d9d9d9;border-radius:3px;background:#fff;font-size:14px;line-height:35px;text-align:center;color:#333">1</div>
<div class="a lbl" style="left:739px;top:881px;font-size:15px;line-height:18px;letter-spacing:0.35px">页 选中1篇稿件共计4页</div>
<div class="a" style="left:0;top:879px;width:209px;height:1px;background:#e9eaef"></div>
<div class="a" style="left:89px;top:863px;width:31px;height:31px;border-radius:50%;background:#7a88cc"><svg class="a" style="left:0;top:0" width="31" height="31" viewBox="0 0 31 31"><path d="M13.4 8.2 L5 15.7 L13.4 23.3 M5.2 15.7 L20.3 15.7" fill="none" stroke="#fff" stroke-width="1.9"/><rect x="23" y="14.7" width="2" height="2" fill="#fff"/></svg></div>
<div class="a" style="left:1850px;top:874px;width:54px;height:50px;background:#c5c9e6;border-radius:3px 3px 0 0"></div>
<svg class="a" style="left:1850px;top:874px" width="54" height="50" viewBox="0 0 54 50"><path d="M13.6 24.5 A13 13 0 0 1 39.6 24.5" fill="none" stroke="#4153b1" stroke-width="1.9"/><rect x="12" y="22.8" width="5.6" height="8.8" rx="2.6" fill="#4153b1"/><rect x="35.6" y="22.8" width="5.5" height="8" rx="2.6" fill="#4153b1"/><circle cx="26.5" cy="26.3" r="10.3" fill="#4153b1"/><path d="M19 29.8 Q25.5 28.6 30.6 23.2 Q33.2 26.8 33.3 31.5 Q32.5 35 30.5 37.5 L22.5 38 Q19.6 34 19 29.8 Z" fill="#c5c9e6"/><path d="M23.8 33.3 Q26.8 35.6 29.8 33.3" fill="none" stroke="#4153b1" stroke-width="1.3"/><path d="M38.2 30.5 Q37.5 38.5 27.5 39.6" fill="none" stroke="#4153b1" stroke-width="1.3"/><circle cx="26.2" cy="39.9" r="1.9" fill="#4153b1"/></svg>
<svg class="a" style="left:18px;top:103px" width="22" height="21" viewBox="0 0 22 21"><rect x="1.7" y="1.8" width="14.1" height="16.8" rx="1.8" fill="none" stroke="#4153b1" stroke-width="1.3"/><path d="M16 4.8 L18.6 5.3 Q19.4 5.8 19.3 6.8 L18 17.6 Q17.6 18.8 16 18.6" fill="none" stroke="#4153b1" stroke-width="1.2"/><path d="M4.5 4.5 L13.5 4.5" stroke="#4153b1" stroke-width="1.2"/><rect x="4.6" y="7.6" width="3" height="3" fill="none" stroke="#4153b1" stroke-width="1.2"/><path d="M9.5 7.6 L13.5 7.6 M9.5 10.6 L13.5 10.6" stroke="#4153b1" stroke-width="1.2"/><path d="M4.5 14 L13.5 14" stroke="#4153b1" stroke-width="1.8"/></svg>
<svg class="a" style="left:18px;top:141px" width="22" height="21" viewBox="0 0 22 21"><path d="M3.5 13.5 L16.5 13.5 Q17.5 13.5 17.5 12.5 L17.5 2.5 Q17.5 1.5 16.5 1.5 L3.5 1.5 Q1.75 1.5 1.75 3.2 L1.75 16.8 Q1.75 18.7 3.5 18.7 L19.2 18.7 L19.2 1.3" fill="none" stroke="#444" stroke-width="1.5"/><path d="M3 15.9 L18 15.9" stroke="#7a7a7a" stroke-width="2"/></svg>
<svg class="a" style="left:18px;top:179px" width="22" height="21" viewBox="0 0 22 21"><path d="M1 5 L20 5" stroke="#4a4a4a" stroke-width="1.5"/><path d="M6.5 4.5 L6.5 3 Q6.5 1.5 8 1.5 L13 1.5 Q14.5 1.5 14.5 3 L14.5 4.5" fill="none" stroke="#444" stroke-width="1.4"/><path d="M3.6 7.2 L3.6 18 Q3.6 19.6 5.2 19.6 L15.9 19.6 Q17.5 19.6 17.5 18 L17.5 7.2" fill="none" stroke="#444" stroke-width="1.5"/><circle cx="10.56" cy="12.4" r="3.3" fill="none" stroke="#4a4a4a" stroke-width="1.9" stroke-dasharray="5.7 1.2" transform="rotate(-83 10.56 12.4)"/></svg>
</body></html>
